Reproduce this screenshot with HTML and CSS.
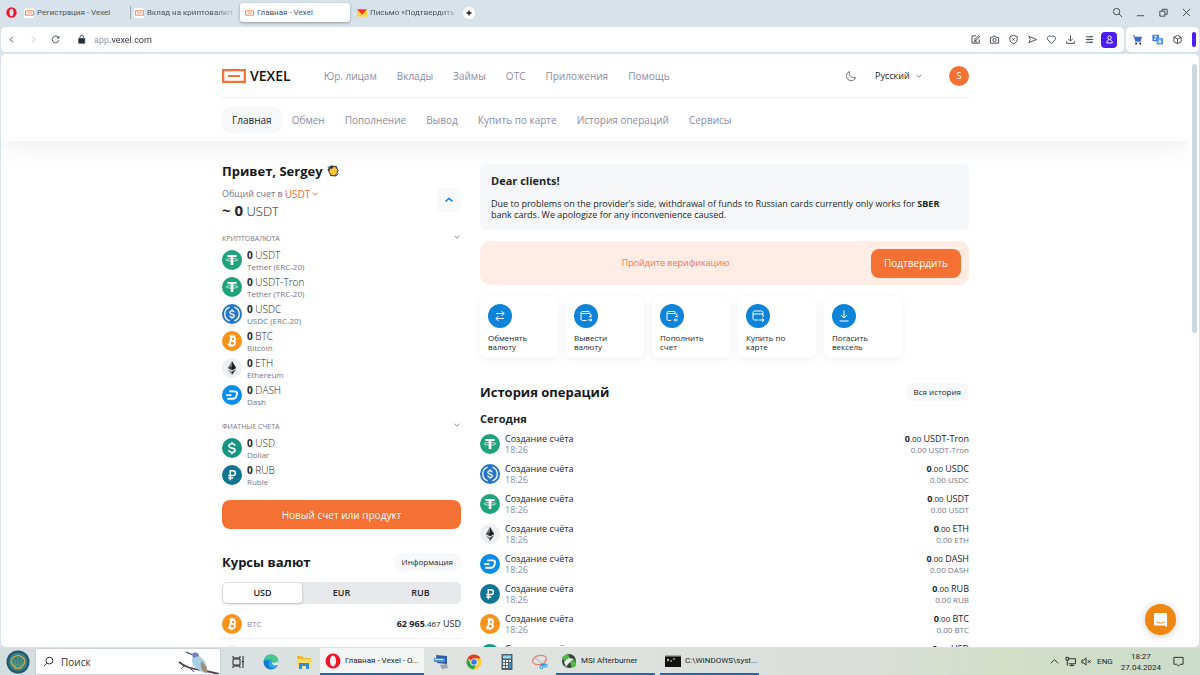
FILE: index.html
```html
<!DOCTYPE html>
<html lang="ru">
<head>
<meta charset="utf-8">
<title>Главная - Vexel</title>
<link rel="stylesheet" href="styles.css">
</head>
<body>
<svg class="sprite" aria-hidden="true">
  <symbol id="usdt" viewBox="0 0 20 20"><circle cx="10" cy="10" r="10" fill="#1fa27a"/><path d="M5.4 4.9h9.2v2.2h-3.300v8h-2.600v-8H5.4z" fill="#fff"/><ellipse cx="10" cy="9.800" rx="5.900" ry="1.300" fill="none" stroke="#fff" stroke-width=".7"/></symbol>
  <symbol id="usdc" viewBox="0 0 20 20"><circle cx="10" cy="10" r="10" fill="#2775ca"/><path d="M7.600 3.200a7.200 7.200 0 0 0 0 13.600M12.400 3.200a7.200 7.200 0 0 1 0 13.600" fill="none" stroke="#fff" stroke-width="1.300"/><path d="M12.200 8.300c-.2-1-1-1.500-2.200-1.500-1.300 0-2.200.6-2.200 1.600 0 2.300 4.500 1 4.500 3.300 0 1-1 1.600-2.300 1.600s-2.200-.6-2.400-1.600M10 5.200v1.600M10 13.300v1.600" fill="none" stroke="#fff" stroke-width="1.200"/></symbol>
  <symbol id="btc" viewBox="0 0 20 20"><circle cx="10" cy="10" r="10" fill="#f7931a"/><g transform="rotate(12 10 10)" fill="none" stroke="#fff"><path d="M6.600 5.800h4.200c2.600 0 2.600 4 0 4H8.500h2.700c3 0 3 4.400 0 4.400H6.600M8.500 5.800v8.400" stroke-width="1.800"/><path d="M8.900 3.700v2M11 3.700v2M8.900 14.300v2M11 14.300v2" stroke-width="1.200"/></g></symbol>
  <symbol id="eth" viewBox="0 0 20 20"><circle cx="10" cy="10" r="10" fill="#edeff3"/><path d="M10 3v9.300l-4.200-2.200z" fill="#777"/><path d="M10 3l4.200 7.100-4.200 2.200z" fill="#222"/><path d="M5.800 11.200l4.200 2.400V17z" fill="#888"/><path d="M14.200 11.200L10 13.600V17z" fill="#333"/><path d="M5.800 10.100L10 8.300l4.200 1.800-4.200 2.200z" fill="#111" opacity=".6"/></symbol>
  <symbol id="dash" viewBox="0 0 20 20"><circle cx="10" cy="10" r="10" fill="#0a8de8"/><path d="M7.200 6.400h5.600c2 0 2.500 1 2.100 2.800l-.5 1.900c-.5 1.900-1.500 2.700-3.400 2.700H5.300M4.200 10.100h5.200" fill="none" stroke="#fff" stroke-width="1.900"/></symbol>
  <symbol id="usd" viewBox="0 0 20 20"><circle cx="10" cy="10" r="10" fill="#159582"/><path d="M13 7.700c-.3-1.300-1.300-2-3-2s-3 .9-3 2.200c0 3.100 6.100 1.300 6.100 4.300 0 1.300-1.300 2.200-3.100 2.200s-3-.8-3.300-2.200M10 3.900v1.800M10 14.300v1.900" fill="none" stroke="#fff" stroke-width="1.600"/></symbol>
  <symbol id="rub" viewBox="0 0 20 20"><circle cx="10" cy="10" r="10" fill="#107593"/><path d="M8.300 15.200V5.800h2.600c3.300 0 3.300 4.800 0 4.800H6.300M6.300 12.900h4.900" fill="none" stroke="#fff" stroke-width="1.500"/></symbol>
  <symbol id="down" viewBox="0 0 8 8"><path d="M1.500 2.700L4 5.200l2.500-2.500" fill="none" stroke="currentColor"/></symbol>
  <symbol id="vexel" viewBox="0 0 24 14"><path d="M1.200 1.200h21.600v11.600H1.200z" fill="#fff" stroke="#f57033" stroke-width="2.300"/><path d="M6 7h12" stroke="#f57033" stroke-width="2"/></symbol>
  <symbol id="opera" viewBox="0 0 16 16"><path fill-rule="evenodd" fill="#f0142d" d="M8 .5a7.500 7.500 0 1 0 0 15 7.500 7.500 0 1 0 0-15zM8 2.600c1.800 0 3 2.300 3 5.400s-1.200 5.400-3 5.400S5 11.100 5 8s1.200-5.400 3-5.400z"/></symbol>
</svg>

<header class="browser">
  <div class="tabs">
    <svg class="opera"><use href="#opera"/></svg>
    <button class="tab"><span class="fav"><svg><use href="#vexel"/></svg></span><span class="tab-name">Регистрация - Vexel</span></button>
    <button class="tab split"><span class="fav"><svg><use href="#vexel"/></svg></span><span class="tab-name fade">Вклад на криптовалюты</span></button>
    <button class="tab active"><span class="fav"><svg><use href="#vexel"/></svg></span><span class="tab-name">Главная - Vexel</span></button>
    <button class="tab"><svg class="mail" viewBox="0 0 11 8"><path fill="#ffd53d" d="M0 0h11v8H0z"/><path fill="#f33" d="M0 0h11L5.500 6z"/></svg><span class="tab-name fade">Письмо «Подтвердить em</span></button>
    <button class="plus" aria-label="Новая вкладка"><svg viewBox="0 0 12 12"><path d="M6 3.500v5M3.500 6h5" stroke="#111" stroke-width="1.300"/></svg></button>
    <div class="window-tools">
      <button aria-label="Поиск вкладок"><svg viewBox="0 0 12 12"><circle cx="5" cy="5" r="3.500"/><path d="M7.600 7.600l3.400 3.400"/></svg></button>
      <button aria-label="Свернуть"><svg viewBox="0 0 12 12"><path d="M2 9.500h8"/></svg></button>
      <button aria-label="Окно"><svg viewBox="0 0 12 12"><path d="M2 4.500h5.500V10H2zM4.500 4.500v-2H10V8H7.500"/></svg></button>
      <button aria-label="Закрыть"><svg viewBox="0 0 12 12"><path d="M2 2l8 8M10 2l-8 8"/></svg></button>
    </div>
  </div>
  <div class="bars">
    <div class="bar address">
      <button aria-label="Назад"><svg viewBox="0 0 12 12"><path d="M7.500 3L4.500 6l3 3"/></svg></button>
      <button aria-label="Вперёд" class="off"><svg viewBox="0 0 12 12"><path d="M4.500 3l3 3-3 3"/></svg></button>
      <button aria-label="Обновить"><svg viewBox="0 0 12 12"><path d="M9.300 4A3.700 3.700 0 1 0 9.700 6.800M9.700 2.200v2.300H7.300"/></svg></button>
      <svg class="lock" viewBox="0 0 12 12"><path d="M3 5h6.500v5H3z" fill="#222b33"/><path d="M4.300 5V3.500a2 2 0 0 1 4 0V5"/></svg>
      <input class="url" type="text" value="app.vexel.com" aria-label="Адрес">
      <div class="tools">
        <button aria-label="Заметка"><svg viewBox="0 0 12 12"><path d="M6.500 2H2.200v8h8V6M5 7.300l.3-1.700L9.600 1.800l1 1.200-4.200 4zM4 8.500h4"/></svg></button>
        <button aria-label="Снимок"><svg viewBox="0 0 12 12"><path d="M1.500 4h2.200l.8-1.500h3L8.300 4h2.200v6h-9z"/><circle cx="6" cy="6.600" r="1.800"/></svg></button>
        <button aria-label="Защита"><svg viewBox="0 0 12 12"><path d="M6 1.500l4 1.300v3C10 8.200 8.300 9.900 6 10.600 3.700 9.900 2 8.200 2 5.800v-3zM4.800 4.600l2.400 2.600M7.200 4.600L4.800 7.200"/></svg></button>
        <button aria-label="Отправить"><svg viewBox="0 0 12 12"><path d="M2 2.500l8.300 3.500L2 9.500 3.600 6z"/></svg></button>
        <button aria-label="Избранное"><svg viewBox="0 0 12 12"><path d="M6 10.300L2 6.300C.2 4.200 3.600.2 6 3.300 8.400.2 11.800 4.200 10 6.300z"/></svg></button>
        <button aria-label="Загрузки"><svg viewBox="0 0 12 12"><path d="M6 1.500v6M3.500 5.200L6 7.700l2.500-2.500M1.800 8v2.200h8.400V8"/></svg></button>
        <button aria-label="Настройки"><svg viewBox="0 0 12 12"><path d="M2 3h8M2 6h8M2 9h8M7.500 2v2M4.500 5v2M7.500 8v2"/></svg></button>
        <button class="profile" aria-label="Профиль"><svg viewBox="0 0 12 12"><circle cx="6" cy="4" r="1.900"/><path d="M3 9.800c-.5-4.800 6.500-4.800 6 0z"/></svg></button>
      </div>
    </div>
    <div class="bar addons">
      <button aria-label="Корзина"><svg viewBox="0 0 12 12"><path d="M2.500 3h8.500l-1.500 4.500H4z" fill="#3d6cc0" stroke="none"/><path d="M.8 1.500h1.500L4 8.500h6" stroke="#3d6cc0"/><circle cx="4.500" cy="10.500" r="1" fill="#111" stroke="none"/><circle cx="9" cy="10.500" r="1" fill="#111" stroke="none"/></svg></button>
      <button aria-label="Переводчик"><svg viewBox="0 0 12 12"><path d="M.5.8h7v7h-7z" fill="#2e78f0" stroke="none"/><path d="M5 4.500h7v7H5z" fill="#5595f7" stroke="none"/><path d="M2.200 2.400h3L2.400 5.800h2M7 10l1.500-4L10 10M7.500 8.700h2" stroke="#fff"/></svg></button>
      <button aria-label="Расширения"><svg viewBox="0 0 12 12"><path d="M6 1.500l4 2v5l-4 2-4-2v-5zM2 3.500l4 2 4-2M6 5.500v5"/></svg></button>
      <span class="mark"></span>
    </div>
  </div>
</header>

<div class="viewport">
  <div class="page">
    <header class="site-header">
      <div class="wrap">
        <div class="top">
          <a class="logo" href="#"><svg><use href="#vexel"/></svg>VEXEL</a>
          <nav class="links"><a href="#">Юр. лицам</a><a href="#">Вклады</a><a href="#">Займы</a><a href="#">OTC</a><a href="#">Приложения</a><a href="#">Помощь</a></nav>
          <button class="moon" aria-label="Тёмная тема"><svg viewBox="0 0 12 12"><path d="M4.300 1.500a4.800 4.800 0 1 0 6.500 5.900A4.900 4.900 0 0 1 4.300 1.500z" fill="none" stroke="currentColor"/></svg></button>
          <label class="pick lang"><select aria-label="Язык"><option>Русский</option></select><svg><use href="#down"/></svg></label>
          <button class="avatar">S</button>
        </div>
        <nav class="links menu"><a class="current" href="#">Главная</a><a href="#">Обмен</a><a href="#">Пополнение</a><a href="#">Вывод</a><a href="#">Купить по карте</a><a href="#">История операций</a><a href="#">Сервисы</a></nav>
      </div>
    </header>

    <main class="wrap columns">
      <aside class="left">
        <h1>Привет, Sergey <svg class="wave" viewBox="0 0 12 12"><path d="M.5 4.500L4 .5l5.500.5L11.500 6 8.500 11.500l-5-.5z" fill="#333a3c"/><path d="M3.500 3.500L5 4l2-2.500 1.500.8L10.300 5 9.500 8.700 7 10.500 3.800 9.500 2.200 6z" fill="#fcc43b"/><path d="M3 .8L.8 3M11.300 8.500L9 11.300" stroke="#29566a"/></svg></h1>
        <section class="balance">
          <div>
            <label class="total">Общий счет в <span class="pick orange"><select><option>USDT</option></select><svg><use href="#down"/></svg></span></label>
            <p class="sum"><b>~ 0</b> USDT</p>
          </div>
          <button class="fold" aria-label="Свернуть счета"><svg viewBox="0 0 10 10"><path d="M1.500 6.300L5 3.500l3.500 2.800" fill="none" stroke="#0d83d9" stroke-width="1.500"/></svg></button>
        </section>
        <h2 class="group">Криптовалюта<svg><use href="#down"/></svg></h2>
        <ul class="accounts crypto">
          <li><svg class="coin"><use href="#usdt"/></svg><div><p><b>0</b> USDT</p><small>Tether (ERC-20)</small></div></li>
          <li><svg class="coin"><use href="#usdt"/></svg><div><p><b>0</b> USDT-Tron</p><small>Tether (TRC-20)</small></div></li>
          <li><svg class="coin"><use href="#usdc"/></svg><div><p><b>0</b> USDC</p><small>USDC (ERC-20)</small></div></li>
          <li><svg class="coin"><use href="#btc"/></svg><div><p><b>0</b> BTC</p><small>Bitcoin</small></div></li>
          <li><svg class="coin"><use href="#eth"/></svg><div><p><b>0</b> ETH</p><small>Ethereum</small></div></li>
          <li><svg class="coin"><use href="#dash"/></svg><div><p><b>0</b> DASH</p><small>Dash</small></div></li>
        </ul>
        <h2 class="group">Фиатные счета<svg><use href="#down"/></svg></h2>
        <ul class="accounts">
          <li><svg class="coin"><use href="#usd"/></svg><div><p><b>0</b> USD</p><small>Dollar</small></div></li>
          <li><svg class="coin"><use href="#rub"/></svg><div><p><b>0</b> RUB</p><small>Ruble</small></div></li>
        </ul>
        <button class="primary wide">Новый счет или продукт</button>
        <div class="heading rates"><h2>Курсы валют</h2><button class="pill">Информация</button></div>
        <div class="segments"><button class="on">USD</button><button>EUR</button><button>RUB</button></div>
        <ul class="quotes">
          <li><svg class="coin"><use href="#btc"/></svg><span>BTC</span><p><b>62 965</b><small>.467</small> USD</p></li>
          <li><svg class="coin"><use href="#eth"/></svg></li>
        </ul>
      </aside>

      <div class="right">
        <section class="notice"><h3>Dear clients!</h3><p>Due to problems on the provider’s side, withdrawal of funds to Russian cards currently only works for <b>SBER</b> bank cards. We apologize for any inconvenience caused.</p></section>
        <section class="verify"><p>Пройдите верификацию</p><button class="primary">Подтвердить</button></section>
        <div class="actions">
          <button><svg viewBox="0 0 24 24"><circle cx="12" cy="12" r="12"/><path d="M8 9.500h8M13.500 7l2.500 2.500-2.500 2.500M16 14.500H8M10.500 12L8 14.500l2.500 2.500"/></svg>Обменять валюту</button>
          <button><svg viewBox="0 0 24 24"><circle cx="12" cy="12" r="12"/><path d="M12.500 16.500H8.500Q7 16.500 7 15V8.500Q7 7.500 8.500 7.500H15v2H7M15 9.500q2 0 2 1.500v2.500M15 12.500h2M14 16h4M16.500 14.500L18 16l-1.500 1.500"/></svg>Вывести валюту</button>
          <button><svg viewBox="0 0 24 24"><circle cx="12" cy="12" r="12"/><path d="M11 16.500H8.500Q7 16.500 7 15V8.500Q7 7.500 8.500 7.500H15v2H7M15 9.500q2 0 2 1.500v2.500M15 12.500h2M18 16h-4M15.500 14.500L14 16l1.500 1.500"/></svg>Пополнить счет</button>
          <button><svg viewBox="0 0 24 24"><circle cx="12" cy="12" r="12"/><path d="M12 16H8.500Q7 16 7 14.500v-6Q7 7 8.500 7h7Q17 7 17 8.500V13M7 10h10M13 16h5M16 14l2 2-2 2"/></svg>Купить по карте</button>
          <button><svg viewBox="0 0 24 24"><circle cx="12" cy="12" r="12"/><path d="M12 6.500V14M9 11l3 3 3-3M7.500 17h9"/></svg>Погасить вексель</button>
        </div>
        <div class="heading"><h2>История операций</h2><button class="pill">Вся история</button></div>
        <h3 class="day">Сегодня</h3>
        <ul class="history">
          <li><svg class="coin"><use href="#usdt"/></svg><div><p>Создание счёта</p><time>18:26</time></div><div class="amount"><p><b>0</b><small>.00</small> USDT-Tron</p><span>0.00 USDT-Tron</span></div></li>
          <li><svg class="coin"><use href="#usdc"/></svg><div><p>Создание счёта</p><time>18:26</time></div><div class="amount"><p><b>0</b><small>.00</small> USDC</p><span>0.00 USDC</span></div></li>
          <li><svg class="coin"><use href="#usdt"/></svg><div><p>Создание счёта</p><time>18:26</time></div><div class="amount"><p><b>0</b><small>.00</small> USDT</p><span>0.00 USDT</span></div></li>
          <li><svg class="coin"><use href="#eth"/></svg><div><p>Создание счёта</p><time>18:26</time></div><div class="amount"><p><b>0</b><small>.00</small> ETH</p><span>0.00 ETH</span></div></li>
          <li><svg class="coin"><use href="#dash"/></svg><div><p>Создание счёта</p><time>18:26</time></div><div class="amount"><p><b>0</b><small>.00</small> DASH</p><span>0.00 DASH</span></div></li>
          <li><svg class="coin"><use href="#rub"/></svg><div><p>Создание счёта</p><time>18:26</time></div><div class="amount"><p><b>0</b><small>.00</small> RUB</p><span>0.00 RUB</span></div></li>
          <li><svg class="coin"><use href="#btc"/></svg><div><p>Создание счёта</p><time>18:26</time></div><div class="amount"><p><b>0</b><small>.00</small> BTC</p><span>0.00 BTC</span></div></li>
          <li><svg class="coin"><use href="#usd"/></svg><div><p>Создание счёта</p><time>18:26</time></div><div class="amount"><p><b>0</b><small>.00</small> USD</p><span>0.00 USD</span></div></li>
        </ul>
      </div>
    </main>
  </div>
  <div class="scroll"><div class="thumb"></div></div>
  <button class="chat" aria-label="Чат"><svg viewBox="0 0 16 16"><path d="M2.500 1h11q1.500 0 1.500 1.500V16l-3-1.500H2.500Q1 14.500 1 13V2.500Q1 1 2.500 1z" fill="#fff"/><path d="M3.500 10.500q4.500 3 9 0" fill="none" stroke="#ee8712"/></svg></button>
</div>

<footer class="taskbar">
  <button class="start" aria-label="Пуск"><svg viewBox="0 0 24 24"><circle cx="12" cy="12" r="11.500" fill="#23566b"/><circle cx="12" cy="12" r="9.500" fill="#2d7f88"/><path d="M9 18h6v-1.500c3.500-1 5-5 3-8l-2.500-2L12 5.500l-3.500 1-2.500 2c-2 3-.5 7 3 8z" fill="none" stroke="#d6a944" stroke-width="1.300"/><path d="M12 16V7M10.500 16L8 8.500M13.500 16L16 8.500M9.500 16L6 11.500M14.500 16l3.500-4.500" fill="none" stroke="#9fae5c" stroke-width=".6"/></svg></button>
  <label class="find"><svg viewBox="0 0 12 12"><circle cx="7" cy="5" r="3.700"/><path d="M4.300 7.800L1 11"/></svg><input type="search" placeholder="Поиск" aria-label="Поиск"><svg class="bird" viewBox="0 0 42 24"><path d="M1 12c8 7 18 7 27 9l13 3" fill="none" stroke="#544052" stroke-width="1.800"/><path d="M6 16l-3 3M12 18l4 4" stroke="#544052"/><path d="M8 2l7 3" stroke="#333a66" stroke-width="1.200"/><path d="M14 4c3-3 7-1 7 2 5 3 9 8 8 17-5 0-7-3-11-5-4-3-5-8-3-11z" fill="#a8cfe4"/><path d="M14 4c3-3 7-1 7 2l-6 2z" fill="#7883bd"/><path d="M23 11c5 4 7 8 6 12-5-1-7-5-6-12z" fill="#a58b7c"/></svg></label>
  <div class="apps">
    <button class="app" aria-label="Представление задач"><svg viewBox="0 0 16 16"><path d="M3 5h7v6H3zM3 2v2h7V2M3 14v-2h7v2M13 2v4M13 9v5" fill="none" stroke="#222"/><path d="M12 6.500h2v2h-2z" fill="#222"/></svg></button>
    <button class="app" aria-label="Edge"><svg viewBox="0 0 16 16"><circle cx="8" cy="8" r="7.500" fill="#1479cf"/><path d="M.7 7C2-1.500 14-1.500 15.400 7c.3 3-4 4-6 2.500 1-2-.4-4-3-4C3.500 5.500 1.500 6 .7 7z" fill="#42cb8b"/><path d="M.7 7c3-3 8-2 8.500 1-.7 2 2 4 5 3-3 5-8 3-8.500 0C5.500 9 6 8 7 7.500 4 5.500 2 6 .7 7z" fill="#2ba9e0"/><path d="M9.200 8c-1 3 3 4.500 6.300 2.500l-.3-4c-1 2.500-4 3-6 1.500z" fill="#e5ecec"/></svg></button>
    <button class="app" aria-label="Проводник"><svg viewBox="0 0 16 16"><path d="M1 2h5l1.500 2H15v9H1z" fill="#f2b62f"/><path d="M1 5h14v8H1z" fill="#ffd866"/><path d="M3 15V9h10v6h-3v-3H6v3z" fill="#2b91df"/></svg></button>
    <button class="app open active"><svg><use href="#opera"/></svg><span>Главная - Vexel - O...</span></button>
    <button class="app" aria-label="Удалённый рабочий стол"><svg viewBox="0 0 16 16"><path d="M3 1l11 1v8L4 9z" fill="#3159ac"/><path d="M1 4h11v4H1z" fill="#4e91e4"/><path d="M2 5.500h8" stroke="#d6ecff"/><path d="M7 11l7-1 1 4-6 1z" fill="#9da3b1"/></svg></button>
    <button class="app" aria-label="Chrome"><svg viewBox="0 0 16 16"><circle cx="8" cy="8" r="7.500" fill="#fc3"/><path d="M8 8L1.500 4.300A7.500 7.500 0 0 1 14.500 4.300H8z" fill="#e6392d"/><path d="M1.500 4.300A7.500 7.500 0 0 0 7.500 15.500L11 9.500 5 9.800z" fill="#2da44e"/><circle cx="8" cy="8" r="3.600" fill="#fff"/><circle cx="8" cy="8" r="2.800" fill="#3b78e7"/></svg></button>
    <button class="app" aria-label="Калькулятор"><svg viewBox="0 0 16 16"><path d="M2.500 0h11v16h-11z" fill="#52606b"/><path d="M4 1.500h8v3H4z" fill="#8ed4f5"/><path d="M4 7h8M4 10h8M4 13h8" stroke="#eee" stroke-width="2" stroke-dasharray="2 1"/><path d="M10 9h2v5h-2z" fill="#2c9ce0"/></svg></button>
    <button class="app" aria-label="Ножницы"><svg viewBox="0 0 16 16"><ellipse cx="7.500" cy="6" rx="7" ry="4.500" transform="rotate(-15 7.500 6)" fill="none" stroke="#e57f7f" stroke-width="1.200"/><path d="M3 4l9 7M14 5l-5 7" stroke="#b5b5b5"/><path d="M9 10.500h4.500" stroke="#238ad0" stroke-width="1.500"/><circle cx="9.500" cy="13" r="1.600" fill="none" stroke="#238ad0"/><circle cx="13.500" cy="11.500" r="1.600" fill="none" stroke="#238ad0"/></svg></button>
    <button class="app open"><svg viewBox="0 0 16 16"><circle cx="8" cy="8" r="7" fill="#34453a"/><path d="M1 4l6-3 2 4-5 4zM9 9l5-2 1 6-4 2z" fill="#52bb43"/><path d="M3 9l5-4 5 1-5 4-3 4z" fill="#eee"/></svg><span>MSI Afterburner</span></button>
    <button class="app open"><svg viewBox="0 0 16 16"><path d="M0 2h16v12H0z" fill="#111"/><path d="M0 2h16v1.500H0z" fill="#aaa"/><path d="M2 6l2 1-2 1M5 8h2M8 6h2" fill="none" stroke="#ddd"/></svg><span>C:\WINDOWS\syst...</span></button>
  </div>
  <div class="tray">
    <svg viewBox="0 0 12 12"><path d="M2 8l4-4 4 4"/></svg>
    <svg viewBox="0 0 12 12"><path d="M4 3h7.500v5.500H4M7.500 8.500v2M5 10.500h5M1 1.500h3v3H1zM2.500 4.500v6"/></svg>
    <svg viewBox="0 0 12 12"><path d="M1 4.500h2l2.500-2.500v8L3 7.500H1zM7.500 4.500l3 3M10.500 4.500l-3 3"/></svg>
    <span>ENG</span>
    <time>18:27<br>27.04.2024</time>
    <svg viewBox="0 0 12 12"><path d="M1 1.500h10V9H8l-2 2-2-2H1z"/></svg>
  </div>
</footer>
</body>
</html>
```
FILE: styles.css
```css
* { box-sizing: border-box; }
body { margin: 0; height: 100vh; display: flex; flex-direction: column; overflow: hidden; background: #d8e2eb; font: 10px/12px "Open Sans", "Noto Sans", sans-serif; color: #222529; }
h1, h2, h3, p, ul { margin: 0; padding: 0; }
ul { list-style: none; }
a { color: inherit; text-decoration: none; }
button, input, select { font: inherit; color: inherit; border: 0; background: none; padding: 0; margin: 0; }
button { display: flex; align-items: center; justify-content: center; cursor: pointer; }
svg { display: block; flex: none; }
small { font-size: 8px; }
b { font-weight: 700; }
.sprite { position: absolute; width: 0; height: 0; }

/* browser frame */
.browser, .taskbar { font-family: Roboto, "Open Sans", sans-serif; }
.tabs { display: flex; align-items: center; height: 25px; padding: 0 8px 0 6px; font-size: 8px; color: #4b535b; }
.opera { width: 11px; height: 11px; margin-right: 3px; }
.tab { width: 107px; height: 19px; margin-right: 3px; padding: 0 4px; gap: 3px; justify-content: flex-start; border-radius: 3px; flex: 0 1 auto; min-width: 0; }
.tab.split { padding-left: 3px; border-left: 1px solid #9aa5ae; border-radius: 0; height: 13px; }
.tab.active { width: 110px; background: #fff; box-shadow: 0 1px 3px #0005; }
.fav { display: grid; place-items: center; width: 10px; height: 10px; background: #fff; border-radius: 2px; flex: none; }
.fav svg { width: 9px; height: 6px; }
.mail { width: 10px; height: 8px; }
.tab-name { overflow: hidden; white-space: nowrap; }
.fade { mask-image: linear-gradient(90deg, #000 80%, #0004); }
.plus { width: 12px; height: 12px; background: #fff; border-radius: 50%; }
.plus svg { width: 12px; height: 12px; }
.window-tools { display: flex; gap: 12px; margin-left: auto; }
.window-tools svg, .bar svg { width: 11px; height: 11px; fill: none; stroke: #3a4249; }
.bars { display: flex; gap: 2px; padding: 2px 1px; }
.bar { display: flex; align-items: center; height: 25px; background: #fff; border-radius: 5px; }
.address { flex: 1; padding: 0 7px 0 5px; gap: 11px; }
.address .off { opacity: .35; }
.lock { margin-left: 4px; }
.url { flex: 1; min-width: 0; font-size: 9px; margin-left: -4px; outline: 0; color: transparent; background: linear-gradient(90deg, #8593a1 15px, #2c343b 15px); background-clip: text; }
.tools { display: flex; align-items: center; gap: 8px; }
.profile { width: 16px; height: 16px; margin-left: -2px; border-radius: 4px; background: #4c1cf5; }
.bar .profile svg { stroke: #fff; }
.addons { padding: 0 3px 0 6px; gap: 9px; }
.mark { width: 4px; height: 15px; border-radius: 2px; background: #4c1cf5; }

/* page */
.viewport { position: relative; flex: 1; min-height: 0; display: flex; margin: 0 1px 1px; background: #fff; border-radius: 5px; overflow: hidden; }
.page { flex: 1; min-width: 0; overflow: hidden; }
.scroll { width: 9px; padding: 10px 2px; }
.thumb { height: 47%; border-radius: 3px; background: #cbd8e1; }
.wrap { max-width: 747px; margin: 0 auto; }
.site-header { background: #fff; box-shadow: 0 0 30px #0000001a; }
.top { display: flex; align-items: center; height: 44px; border-bottom: 1px solid #ededef; }
.logo { display: flex; align-items: center; gap: 4px; font-size: 14px; font-weight: 600; color: #111; }
.logo svg { width: 24px; height: 14px; }
.links { display: flex; align-items: center; gap: 20px; color: #8b8ba3; }
.top .links { margin-left: 33px; }
.menu { height: 43px; }
.current { margin-right: -10px; padding: 7px 10px; border-radius: 8px; background: #f6f8fa; color: #222529; }
.moon { margin-left: auto; color: #74758a; }
.moon svg { width: 12px; height: 12px; }
.pick { display: inline-flex; align-items: center; gap: 2px; }
.pick select { appearance: none; }
.pick svg { width: 8px; height: 8px; }
.lang { margin: 0 26px 0 18px; gap: 5px; font-size: 9px; }
.lang svg, .group svg { color: #85869b; }
.avatar { width: 20px; height: 20px; border-radius: 50%; background: #f57033; color: #fff; font-size: 9px; }
.columns { display: grid; grid-template-columns: 239px minmax(0, 1fr); gap: 19px; padding-top: 20px; }
.coin { width: 20px; height: 20px; }
h1, .heading h2 { font-size: 13px; line-height: 20px; font-weight: 700; color: #16181b; }
h1 { display: flex; align-items: center; gap: 4px; }
.wave { width: 12px; height: 12px; }
.balance { display: flex; justify-content: space-between; align-items: flex-start; margin: 6px 0 13px; }
.total { display: flex; align-items: center; gap: 2px; font-size: 9px; line-height: 14px; color: #74758a; }
.orange { color: #f57033; gap: 0; font-size: 10px; }
.sum { font-size: 13px; line-height: 18px; font-weight: 300; }
.sum b { font-size: 15px; }
.fold { width: 24px; height: 24px; margin-top: 1px; border-radius: 5px; background: #f6f8fa; }
.fold svg { width: 10px; height: 10px; }
.group { display: flex; justify-content: space-between; font-size: 7px; line-height: 12px; font-weight: 400; text-transform: uppercase; color: #74758a; }
.group svg { width: 8px; height: 8px; }
.accounts { display: flex; flex-direction: column; gap: 3px; padding: 3px 0 13px; }
.crypto { padding-bottom: 14px; }
.accounts li { display: flex; align-items: center; gap: 5px; height: 24px; }
.accounts p { line-height: 12px; font-weight: 300; }
.accounts small { display: block; line-height: 11px; color: #74758a; }
.primary { height: 29px; padding: 0 13px; border-radius: 8px; background: #f57033; color: #fff; font-weight: 500; }
.wide { width: 100%; }
.heading { display: flex; align-items: center; justify-content: space-between; }
.rates { margin: 23px 0 10px; }
.pill { height: 18px; padding: 0 8px; border-radius: 8px; background: #f6f8fa; font-size: 8px; }
.segments { display: grid; grid-template-columns: repeat(3, 1fr); height: 22px; padding: 1px; border-radius: 5px; background: #e7e8ea; font-size: 9px; font-weight: 600; }
.segments button { border-radius: 4px; }
.segments .on { background: #fff; box-shadow: 0 1px 3px #0003; }
.quotes li { display: flex; align-items: center; gap: 5px; padding: 10px 0 4px; border-bottom: 1px solid #ededef; }
.quotes li + li { padding-top: 6px; }
.quotes span { font-size: 8px; color: #8b8ba3; }
.quotes p { margin-left: auto; font-size: 9px; }

.notice { margin-top: 3px; padding: 9px 11px 10px; border-radius: 6px; background: #f5f7f9; }
.notice h3 { font-size: 11px; line-height: 16px; }
.notice p { margin-top: 9px; font-size: 9px; line-height: 11px; }
.verify { display: flex; align-items: center; height: 44px; margin: 11px 0; padding-right: 8px; border-radius: 10px; background: #ffede5; color: #f4754f; }
.verify p { flex: 1; text-align: center; font-size: 9px; }
.actions { display: flex; gap: 8px; }
.actions button { width: 78px; height: 62px; flex-direction: column; align-items: flex-start; gap: 5px; padding: 8px; border-radius: 8px; background: #fff; box-shadow: 0 2px 10px #0000000f; font-size: 8px; line-height: 9px; text-align: left; }
.actions svg { width: 24px; height: 24px; fill: none; stroke: #fff; }
.actions circle { fill: #0d83d9; stroke: none; }
.actions + .heading { margin: 24px 0 9px; }
.day { font-size: 11px; line-height: 16px; }
.history { padding-top: 2px; }
.history li { display: flex; align-items: center; gap: 5px; height: 30px; line-height: 11px; }
.history p { font-size: 9px; }
.history time { display: block; font-size: 9px; color: #8b8ba3; }
.amount { margin-left: auto; text-align: right; }
.amount span { display: block; font-size: 8px; color: #74758a; }
.chat { position: absolute; right: 23px; bottom: 12px; width: 31px; height: 31px; border-radius: 50%; background: #ee8712; box-shadow: 0 1px 9px #0003; }
.chat svg { width: 15px; height: 15px; }

/* taskbar */
.taskbar { display: flex; align-items: stretch; height: 27px; font-size: 8px; background: linear-gradient(90deg, #d3dddf, #dfe4e0 40%, #dadeda 72%, #d3dfc7 84%, #ccdccb); }
.start { width: 35px; }
.start svg { width: 24px; height: 24px; }
.find { display: flex; align-items: center; gap: 7px; width: 186px; padding-left: 7px; background: #fff; border: 1px solid #cdd3d5; font: 10px "Open Sans", sans-serif; }
.find svg { width: 11px; height: 11px; fill: none; stroke: #222; }
.find input { flex: 1; min-width: 0; }
.find input::placeholder { color: #333; }
.find .bird { width: 42px; height: 24px; stroke: none; }
.apps { display: flex; }
.app { width: 33px; gap: 4px; }
.app svg { width: 16px; height: 16px; }
.app.open { width: 99px; padding: 0 5px; margin-right: 5px; justify-content: flex-start; border-bottom: 2px solid #0b6fc9; white-space: nowrap; }
.app.active { width: 104px; margin-right: 0; background: #f3f6f5; }
.tray { display: flex; align-items: center; gap: 5px; margin-left: auto; padding-right: 16px; }
.tray svg { width: 11px; height: 11px; fill: none; stroke: #222; }
.tray time { margin: 0 7px 0 3px; line-height: 11px; text-align: center; }
```
